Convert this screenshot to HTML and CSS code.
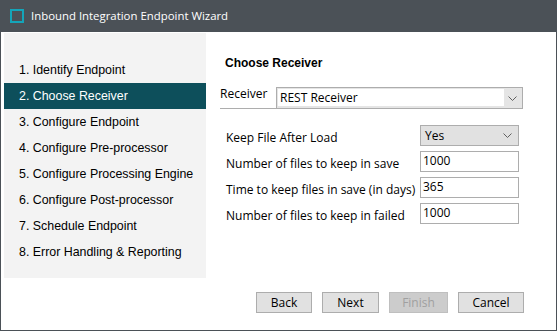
FILE: index.html
```html
<!DOCTYPE html>
<html>
<head>
<meta charset="utf-8">
<link rel="stylesheet" href="styles.css">
</head>
<body>
<div class="window">
  <div class="titlebar">
    <span class="app-icon"></span>
    <span class="title">Inbound Integration Endpoint Wizard</span>
  </div>
  <div class="main">
    <nav class="nav">
      <div class="step">1. Identify Endpoint</div>
      <div class="step active">2. Choose Receiver</div>
      <div class="step">3. Configure Endpoint</div>
      <div class="step">4. Configure Pre-processor</div>
      <div class="step">5. Configure Processing Engine</div>
      <div class="step">6. Configure Post-processor</div>
      <div class="step">7. Schedule Endpoint</div>
      <div class="step">8. Error Handling &amp; Reporting</div>
    </nav>
    <section class="content">
      <h1 class="heading">Choose Receiver</h1>
      <div class="receiver-row">
        <span class="receiver-label">Receiver</span>
        <div class="combo">
          <div class="combo-field">REST Receiver</div>
          <svg class="chev" width="9" height="5" viewBox="0 0 9 5"><path d="M0.5 0.5 L4.5 4.5 L8.5 0.5" fill="none" stroke="#606060" stroke-width="1"/></svg>
        </div>
      </div>
      <div class="form">
        <label class="lbl">Keep File After Load</label>
        <div class="select"><span>Yes</span><svg class="chev" width="9" height="5" viewBox="0 0 9 5"><path d="M0.5 0.5 L4.5 4.5 L8.5 0.5" fill="none" stroke="#606060" stroke-width="1"/></svg></div>
        <label class="lbl">Number of files to keep in save</label>
        <div class="input">1000</div>
        <label class="lbl">Time to keep files in save (in days)</label>
        <div class="input">365</div>
        <label class="lbl">Number of files to keep in failed</label>
        <div class="input">1000</div>
      </div>
      <div class="buttons">
        <button class="btn btn-back">Back</button>
        <button class="btn btn-next">Next</button>
        <button class="btn btn-finish" disabled>Finish</button>
        <button class="btn btn-cancel">Cancel</button>
      </div>
    </section>
  </div>
</div>
</body>
</html>
```
FILE: styles.css
```css
* { box-sizing: border-box; }
html, body { margin: 0; padding: 0; background: #ffffff; }
body { font-family: "Open Sans", "Liberation Sans", sans-serif; }

.window {
  width: 557px;
  height: 331px;
  display: flex;
  flex-direction: column;
  border: 1px solid #4b5157;
  border-top: 0;
  background: #ffffff;
}

.titlebar {
  height: 32px;
  margin: 0 -1px;
  background: #4b5157;
  display: flex;
  align-items: center;
  padding-left: 10px;
  flex-shrink: 0;
}
.app-icon {
  width: 14px;
  height: 14px;
  border: 2px solid #14a5b9;
  margin-right: 7px;
  margin-top: -1px;
}
.title {
  color: #ffffff;
  font-family: "Open Sans", sans-serif;
  font-size: 11.4px;
  margin-top: -1px;
}

.main {
  flex: 1;
  display: flex;
  padding: 1px 0 0 3px;
}

.nav {
  width: 202px;
  height: 245px;
  background: #f3f3f3;
  padding-top: 24px;
  font-family: "Liberation Sans", Arial, sans-serif;
  font-size: 12.4px;
  color: #000000;
}
.step {
  height: 26px;
  line-height: 27px;
  padding-left: 15px;
  white-space: nowrap;
}
.step.active {
  background: #0d4f5b;
  color: #ffffff;
}

.content {
  flex: 1;
  display: flex;
  flex-direction: column;
  padding: 0 32px 17px 14px;
}

.heading {
  margin: 22px 0 0 5px;
  height: 16px;
  line-height: 17px;
  font-family: "Liberation Sans", Arial, sans-serif;
  font-size: 12px;
  font-weight: bold;
  color: #000000;
}

.receiver-row {
  margin-top: 14px;
  width: 303px;
  display: flex;
  align-items: flex-end;
  border-bottom: 1px solid #adadad;
}
.receiver-label {
  font-size: 12px;
  width: 56px;
  padding-bottom: 6px;
  color: #000;
}
.combo {
  flex: 1;
  height: 21px;
  border: 1px solid #adadad;
  border-bottom: 0;
  background: #e5e5e5;
  display: flex;
  align-items: center;
  padding: 1px 0 0 1px;
}
.combo-field {
  width: 226px;
  height: 17px;
  background: #ffffff;
  font-size: 12px;
  line-height: 17px;
  padding-left: 2px;
  color: #000;
  align-self: flex-start;
}
.chev { margin-left: auto; margin-right: 5px; }

.form {
  margin: 16px 0 0 6px;
  display: grid;
  grid-template-columns: 194px 99px;
  grid-auto-rows: 21px;
  row-gap: 5px;
  align-items: center;
}
.lbl {
  font-size: 12px;
  color: #000;
  white-space: nowrap;
  padding-top: 3px;
}
.select {
  height: 21px;
  border: 1px solid #adadad;
  background: #e1e1e1;
  display: flex;
  align-items: center;
  padding-left: 4px;
  font-size: 12px;
  color: #000;
}
.select .chev { margin-right: 6px; }
.input {
  height: 21px;
  border: 1px solid #adadad;
  background: #ffffff;
  padding-left: 2px;
  font-size: 12px;
  line-height: 18px;
  color: #000;
}

.buttons {
  margin-top: auto;
  display: flex;
  justify-content: flex-end;
  gap: 10px;
}
.btn {
  height: 21px;
  border: 1px solid #adadad;
  background: #e1e1e1;
  font-family: "Open Sans", sans-serif;
  font-size: 12px;
  color: #000;
  padding: 0;
  line-height: 18px;
}
.btn-back { width: 56px; }
.btn-next { width: 57px; }
.btn-finish { width: 59px; background: #cccccc; border-color: #bfbfbf; color: #a0a0a0; }
.btn-cancel { width: 66px; }
```
